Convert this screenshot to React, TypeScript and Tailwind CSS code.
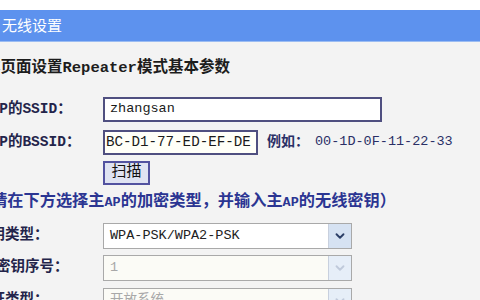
import React from 'react';
import { ChevronDown } from 'lucide-react';

const font = { fontFamily: '"Liberation Mono", "Noto Sans CJK SC", monospace' };

const Select = ({ value, disabled }: { value: string; disabled?: boolean }) => (
  <div
    className={`flex h-[26px] w-[249px] items-stretch border border-[#a9a9a9] ${
      disabled ? 'bg-[#fbfbf6]' : 'bg-white'
    }`}
  >
    <div
      className={`flex-1 flex items-center pl-[6px] text-[13.5px] ${
        disabled ? 'text-[#a8a8a8]' : 'text-[#222]'
      }`}
    >
      {value}
    </div>
    <div
      className={`w-[23px] flex items-center justify-center border-l border-[#c8d0de] ${
        disabled ? 'bg-[#e6eef8]' : 'bg-[#d6e2f2]'
      }`}
    >
      <ChevronDown
        size={14}
        strokeWidth={3.2}
        className={disabled ? 'text-[#c0cadb]' : 'text-[#2c3e66]'}
      />
    </div>
  </div>
);

const Row = ({
  label,
  children,
  className = '',
  labelClass = '',
}: {
  label: string;
  children: React.ReactNode;
  className?: string;
  labelClass?: string;
}) => (
  <div className={`flex items-center ${className}`}>
    <div className="w-[127px] shrink-0 text-[14.5px] font-bold text-[#23244a] whitespace-nowrap">
      <span className={labelClass}>{label}</span>
    </div>
    {children}
  </div>
);

export default function App() {
  return (
    <div className="w-[480px] h-[300px] overflow-hidden bg-[#f3f3f3]" style={font}>
      <div className="h-[10px] bg-white" />
      <div className="h-[32px] bg-[#5d92ee] flex items-center pl-[2px] border-b border-[#9bbcf2]">
        <span className="text-[15px] text-white" style={{ fontFamily: '"Noto Sans CJK SC", sans-serif' }}>
          无线设置
        </span>
      </div>

      <div className="ml-[-15px] mt-[17px] leading-[18px] text-[15.5px] font-semibold text-[#1d1d1d] whitespace-nowrap">
        本页面设置Repeater模式基本参数
      </div>

      <div className="ml-[-24px] mt-[20px] flex flex-col">
        <Row label="主AP的SSID：">
          <div className="h-[25px] w-[279px] border-2 border-[#4f4f80] bg-white flex items-center pl-[5px] text-[13.5px] text-[#1a1a1a]">
            zhangsan
          </div>
        </Row>

        <Row label="主AP的BSSID：" className="mt-[8px]">
          <div className="h-[25px] w-[155px] border-2 border-[#4f4f80] bg-[#fffff8] flex items-center pl-[1px] text-[14.2px] text-[#1a1a1a] whitespace-nowrap">
            BC-D1-77-ED-EF-DE
          </div>
          <span className="ml-[9px] text-[14px] font-semibold text-[#2a2f66] whitespace-nowrap">例如：</span>
          <span className="ml-[6px] text-[13.5px] text-[#2a2f66] whitespace-nowrap">00-1D-0F-11-22-33</span>
        </Row>

        <Row label="" className="mt-[6px]">
          <button className="h-[24px] w-[47px] border-2 border-[#5252a0] bg-[#dfe3f2] text-[15px] text-[#111] flex items-center justify-center">
            扫描
          </button>
        </Row>

        <div className="ml-[-1px] mt-[9px] h-[16px] leading-[16px] text-[16.2px] font-bold text-[#2b3592] whitespace-nowrap">
          （请在下方选择主<span className="text-[13.5px]">AP</span>的加密类型，并输入主<span className="text-[13.5px]">AP</span>的无线密钥）
        </div>

        <Row label="密钥类型：" className="mt-[13px]">
          <Select value="WPA-PSK/WPA2-PSK" />
        </Row>
        <Row label="WEP密钥序号：" className="mt-[6px]" labelClass="ml-[-6px]">
          <Select value="1" disabled />
        </Row>
        <Row label="认证类型：" className="mt-[7px]">
          <Select value="开放系统" disabled />
        </Row>
      </div>
    </div>
  );
}
